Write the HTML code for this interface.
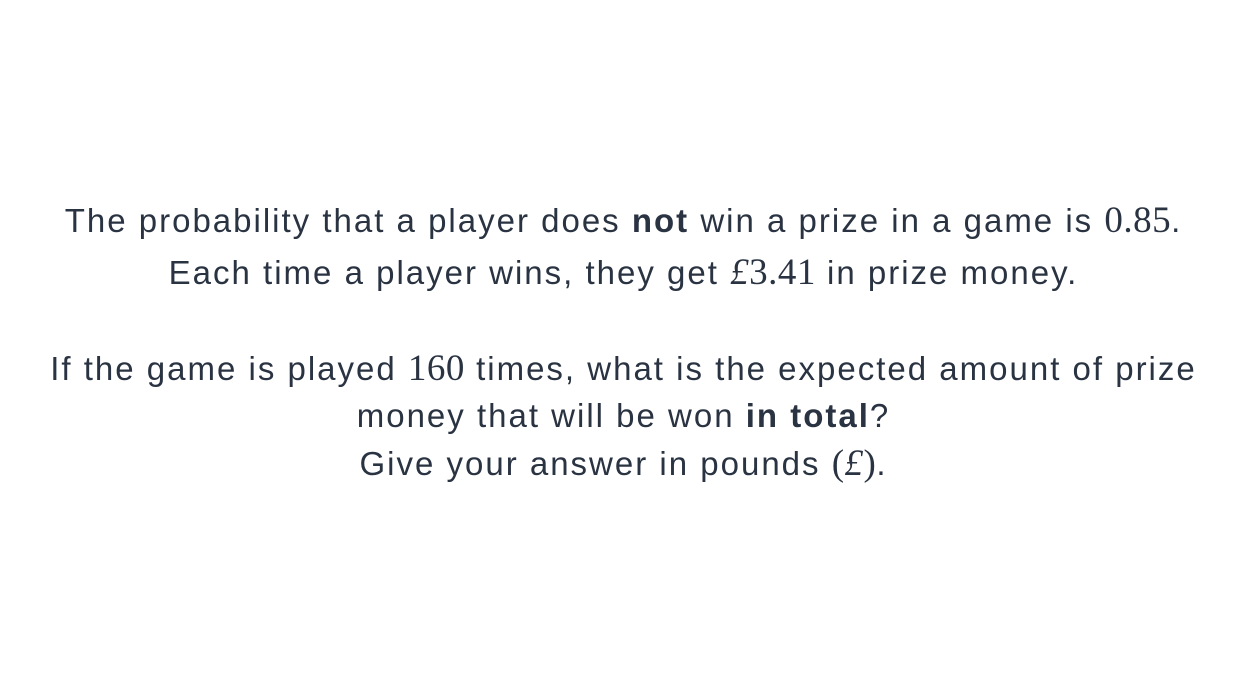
<!DOCTYPE html>
<html><head><meta charset="utf-8"><style>
html,body{margin:0;padding:0;background:#fff;}
body{width:1247px;height:691px;position:relative;overflow:hidden;font-family:"Liberation Sans",sans-serif;color:#2a3342;}
.l{position:absolute;left:0;width:1247px;text-align:center;font-size:33px;letter-spacing:2px;line-height:40px;white-space:nowrap;}
.m{font-family:"Liberation Serif",serif;font-size:37px;letter-spacing:0.5px;}
.i{font-style:italic;}
b{font-weight:700;}
</style></head><body>
<div class="l" style="top:201px">The probability that a player does <b>not</b> win a prize in a game is <span class="m">0.85</span>.</div>
<div class="l" style="top:253px">Each time a player wins, they get <span class="m"><span class="i">£</span>3.41</span> in prize money.</div>
<div class="l" style="top:349px">If the game is played <span class="m">160</span> times, what is the expected amount of prize</div>
<div class="l" style="top:396px">money that will be won <b>in total</b>?</div>
<div class="l" style="top:444px">Give your answer in pounds <span class="m">(<span class="i">£</span>)</span>.</div>
</body></html>
